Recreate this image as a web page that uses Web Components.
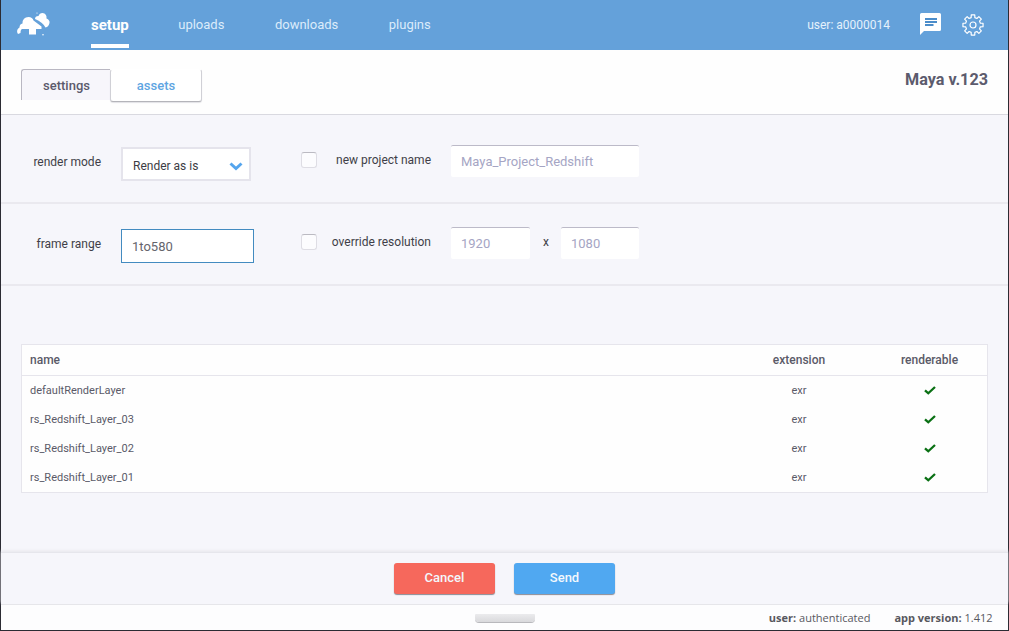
<!DOCTYPE html>
<html lang="en">
<head>
<meta charset="utf-8">
<title>Maya v.123</title>
<style>
  html, body { height: 100%; }
  body { margin: 0; overflow: hidden; background: #2b2b33; }
</style>
</head>
<body>
<submit-app></submit-app>

<script>
function define(name, markup) {
  window.customElements.define(
    name,
    class extends HTMLElement {
      connectedCallback() {
        if (this.shadowRoot) return
        this.attachShadow({ mode: 'open' }).innerHTML = markup
      }
    }
  )
}

define('app-logo', `
  <style>
    :host { display: block; width: 34px; height: 26px; }
    svg { display: block; }
  </style>
  <svg width="34" height="26" viewBox="0 0 34 26" fill="#fff">
    <path d="M1 22Q-.5 20 .5 17.500Q1.500 16 2.500 15.500Q2.500 12 5.500 11.500Q5.500 5 11.500 5Q15.500 5 16.500 8.500L24.500 14.500V17H19V22.500H12V17H5Q3.500 17.500 3.500 21Z"/>
    <path d="M18 7Q18 4 21.500 4Q22.500 1 25.500 1Q30 1.500 29.500 6.500Q33 8 32.500 11Q31.500 15 28.500 15.500Q26 10.500 18 7Z"/>
    <circle cx="20" cy="1" r=".6"/><circle cx="26" cy="22.700" r=".8"/>
  </svg>`)

define('chat-icon', `
  <style>:host { display: block; width: 21px; height: 22px; } svg { display: block; }</style>
  <svg width="21" height="22" viewBox="0 0 21 22">
    <path d="M1.500 0H19.500Q21 0 21 1.500V16.500Q21 18 19.500 18H4L0 22V1.500Q0 0 1.500 0Z" fill="#fff"/>
    <path d="M5 6H17M5 9H17M5 12H13.500" stroke="#4c8dca" stroke-width="1.800"/>
  </svg>`)

// the gear outline is generated tooth by tooth
window.customElements.define(
  'gear-icon',
  class extends HTMLElement {
    connectedCallback() {
      const points = []
      for (let i = 0; i < 8; i++) {
        for (const [offset, r] of [[-14, 7.6], [-10, 10.2], [10, 10.2], [14, 7.6]]) {
          const a = ((i * 45 + offset) * Math.PI) / 180
          points.push((11 + r * Math.sin(a)).toFixed(2) + ' ' + (11 - r * Math.cos(a)).toFixed(2))
        }
      }
      this.attachShadow({ mode: 'open' }).innerHTML = `
        <style>:host { display: block; width: 22px; height: 22px; } svg { display: block; }</style>
        <svg width="22" height="22" viewBox="0 0 22 22" fill="none" stroke="#fff" stroke-width="1.2" stroke-linejoin="round">
          <path d="M${points.join('L')}Z"/>
          <circle cx="11" cy="11" r="3"/>
        </svg>`
    }
  }
)

define('check-icon', `
  <style>:host { display: inline-block; width: 12px; height: 9px; vertical-align: -1px; } svg { display: block; }</style>
  <svg width="12" height="9" viewBox="0 0 12 9" fill="none" stroke="#0a7014" stroke-width="2.300">
    <path d="M1 4.300L4.300 7.300L11 1"/>
  </svg>`)

define('nav-item', `
  <style>
    :host { display: flex; flex-direction: column; align-items: center; color: #dcecfa; font-size: 13px; }
    span { height: 44px; line-height: 49px; }
    i { width: 100%; height: 4px; }
    :host([active]) { color: #fff; font-size: 15px; font-weight: 700; }
    :host([active]) i { background: #fff; }
    :host([active]) span { line-height: 50px; }
  </style>
  <span><slot></slot></span><i></i>`)

define('top-bar', `
  <style>
    :host { display: flex; height: 50px; background: #64a1da; box-sizing: border-box; padding: 0 24px 0 16px; }
    nav { display: flex; gap: 50.500px; margin-left: 40px; }
    nav-item[active] { margin-right: -1px; }
    .right { display: flex; align-items: center; margin-left: auto; color: #e4f1fc; font-size: 12px; }
    app-logo { margin-top: 12px; }
    chat-icon { margin: -2px 0 0 30px; }
    gear-icon { margin-left: 21px; }
  </style>
  <app-logo></app-logo>
  <nav>
    <nav-item active>setup</nav-item>
    <nav-item>uploads</nav-item>
    <nav-item>downloads</nav-item>
    <nav-item>plugins</nav-item>
  </nav>
  <div class="right">
    <span>user: a0000014</span>
    <chat-icon></chat-icon>
    <gear-icon></gear-icon>
  </div>`)

define('tab-bar', `
  <style>
    :host { display: flex; height: 65px; box-sizing: border-box; border-bottom: 1px solid #d9d9e0; background: #fefefe; padding: 19px 20px 0; }
    .tab { box-sizing: border-box; font-size: 13px; font-weight: 500; text-align: center; line-height: 32px; }
    .settings { width: 89px; height: 31px; padding-left: 1px; background: #f7f6fb; color: #5b5a6b; border: 1px solid #b9b7c2; border-width: 1px 0 0 1px; border-radius: 3px 0 0 0; }
    .assets { width: 92px; height: 33px; color: #5ea5e2; background: #fff; border: 1px solid #d0d0d6; border-top-color: transparent; border-bottom-color: #b4b4ba; border-radius: 3px; box-shadow: 0 1px 1px #e2e2e6; }
    h1 { margin: 1px 0 0 auto; font-size: 16.200px; line-height: 20px; font-weight: 700; color: #5c5b6d; }
  </style>
  <div class="tab settings">settings</div>
  <div class="tab assets">assets</div>
  <h1>Maya v.123</h1>`)

define('text-box', `
  <style>
    :host { display: block; box-sizing: border-box; height: 32px; padding-left: 10px; background: #fff; border-top: 1px solid #bcbac8; border-radius: 2px; color: #a5a5c4; font-size: 13px; line-height: 32px; }
    :host([focused]) { height: 34px; border: 1px solid #438bc0; border-radius: 0; color: #65656d; line-height: 34px; }
  </style>
  <slot></slot>`)

define('select-box', `
  <style>
    :host { display: flex; box-sizing: border-box; align-items: center; justify-content: space-between; width: 130px; height: 34px; padding: 3px 6px 0 10px; background: #fff; border: 2px solid #e5e4ec; color: #3c3c44; font-size: 12px; }
    svg { margin-top: 2px; }
  </style>
  <slot></slot>
  <svg width="14" height="9" viewBox="0 0 14 9" fill="none" stroke="#55a5ed" stroke-width="3">
    <path d="M1.500 1.500L7 6.500L12.500 1.500"/>
  </svg>`)

define('form-row', `
  <style>
    :host { display: flex; box-sizing: border-box; border-bottom: 2px solid #eae9ef; font-size: 12px; color: #3f3f48; line-height: 16px; }
    .label { width: 100px; padding-top: 7px; text-align: right; }
    .field { width: 133px; margin-left: 20px; }
    .box { box-sizing: border-box; width: 16px; height: 16px; margin: 5px 0 0 47px; border: 1px solid #dedde4; border-top-color: #bbbac2; border-radius: 3px; background: #fcfcfe; }
    .option { width: 114px; padding-top: 5px; text-align: right; }
    .inputs { display: flex; margin: -2px 0 0 20px; }
  </style>
  <div class="label"><slot name="label"></slot></div>
  <div class="field"><slot name="field"></slot></div>
  <div class="box"></div>
  <div class="option"><slot name="option"></slot></div>
  <div class="inputs"><slot name="inputs"></slot></div>`)

define('settings-form', `
  <style>
    :host { display: block; }
    form-row { height: 82px; padding-top: 25px; }
    form-row:first-of-type { height: 89px; padding-top: 32px; }
    .pair { display: flex; }
    .pair i { width: 31px; text-align: center; font-style: normal; padding: 7px 0 0 1px; box-sizing: border-box; }
    text-box.name { width: 188px; }
    text-box.size { width: 79px; }
    text-box.size:last-child { width: 78px; }
  </style>
  <form-row>
    <span slot="label">render mode</span>
    <select-box slot="field">Render as is</select-box>
    <span slot="option">new project name</span>
    <text-box class="name" slot="inputs">Maya_Project_Redshift</text-box>
  </form-row>
  <form-row>
    <span slot="label">frame range</span>
    <text-box focused slot="field">1to580</text-box>
    <span slot="option">override resolution</span>
    <div class="pair" slot="inputs">
      <text-box class="size">1920</text-box><i>x</i><text-box class="size">1080</text-box>
    </div>
  </form-row>`)

window.customElements.define(
  'layer-table',
  class extends HTMLElement {
    connectedCallback() {
      const rows = this.getAttribute('layers').split(' ').map(name => `
        <div class="row"><span>${name}</span><span>exr</span><span><check-icon></check-icon></span></div>`)
      this.attachShadow({ mode: 'open' }).innerHTML = `
        <style>${this.css()}</style>
        <div class="row head"><span>name</span><span>extension</span><span>renderable</span></div>
        ${rows.join('')}`
    }

    css() {
      return `
        :host { display: block; box-sizing: border-box; height: 149px; background: #fefefe; border: 1px solid #e6e5ec; color: #5a5a68; font-size: 11px; }
        .row { display: grid; grid-template-columns: 1fr 146px 115px; height: 29px; line-height: 29px; }
        .row span { text-align: center; }
        .row span:first-child { text-align: left; padding-left: 8px; }
        .head { height: 30px; line-height: 30px; border-bottom: 1px solid #e6e5ec; font-size: 12px; font-weight: 500; }
      `
    }
  }
)

define('push-button', `
  <style>
    :host { display: block; width: 101px; height: 31px; border-radius: 3px; background: #50a8f1; color: #f3f8fd; font-size: 13px; font-weight: 500; line-height: 30px; text-align: center; box-shadow: 0 1px 1px #8b8b94; }
    :host([kind=cancel]) { background: #f6685c; }
  </style>
  <slot></slot>`)

define('action-bar', `
  <style>
    :host { display: flex; box-sizing: border-box; height: 52px; justify-content: center; gap: 19px; padding-top: 10px; background: #f6f6fb; border-top: 1px solid #e6e6ec; box-shadow: 0 -1px 3px #e6e5eb; }
  </style>
  <push-button kind="cancel">Cancel</push-button>
  <push-button>Send</push-button>`)

define('status-bar', `
  <style>
    :host { display: grid; grid-template-columns: 1fr 60px 1fr; box-sizing: border-box; height: 26px; border-top: 1px solid #e6e6ea; background: #fdfdfe; color: #58585e; font: 11px/26px "Open Sans", sans-serif; }
    .grip { grid-column: 2; height: 8px; margin-top: 9px; border-radius: 1px 1px 4px 4px; background: linear-gradient(#ebebed, #d9d9dc); box-shadow: 0 1px 0 #b8b8bc; }
    .info { display: flex; justify-content: flex-end; gap: 24px; padding-right: 15.500px; white-space: nowrap; }
  </style>
  <div class="grip"></div>
  <div class="info">
    <span><b>user:</b> authenticated</span>
    <span><b>app version:</b> 1.412</span>
  </div>`)

define('submit-app', `
  <style>
    :host { display: flex; flex-direction: column; box-sizing: border-box; width: 1009px; height: 631px; border: 1px solid #2b2b33; border-top: 0; background: #f6f6fb; font-family: Roboto, sans-serif; }
    layer-table { margin: 58px 20px 0; }
    action-bar { margin-top: auto; }
  </style>
  <top-bar></top-bar>
  <tab-bar></tab-bar>
  <settings-form></settings-form>
  <layer-table layers="defaultRenderLayer rs_Redshift_Layer_03 rs_Redshift_Layer_02 rs_Redshift_Layer_01"></layer-table>
  <action-bar></action-bar>
  <status-bar></status-bar>`)
</script>
</body>
</html>
